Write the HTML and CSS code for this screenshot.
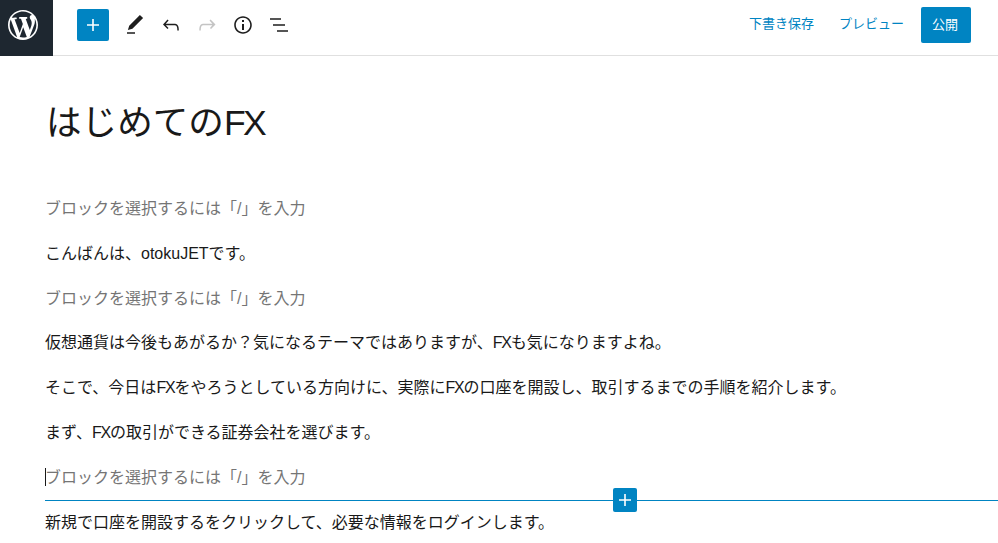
FILE: index.html
```html
<!DOCTYPE html>
<html lang="ja">
<head>
<meta charset="utf-8">
<title>はじめてのFX</title>
<link rel="stylesheet" href="styles.css">
</head>
<body>
<header class="topbar">
  <div class="wp-logo">
    <svg width="30" height="30" viewBox="0 0 20 20" fill="#fff"><path d="M20 10c0-5.510-4.490-10-10-10C4.480 0 0 4.490 0 10c0 5.520 4.480 10 10 10 5.510 0 10-4.480 10-10zM7.780 15.370L4.370 6.220c.55-.02 1.170-.08 1.170-.08.5-.06.44-1.130-.06-1.110 0 0-1.450.11-2.370.11-.18 0-.37 0-.58-.01C4.120 2.690 6.890 1.050 10 1.050c2.320 0 4.430.88 6.020 2.350-.62-.1-1.520.37-1.520 1.440 0 .66.38 1.220.79 1.880.31.550.5 1.220.5 2.200 0 1.330-1.250 4.460-1.250 4.460l-2.710-7.400c.48-.03.730-.16.730-.16.5-.05.44-1.250-.06-1.220 0 0-1.450.12-2.390.12-.87 0-2.330-.12-2.330-.12-.5-.03-.56 1.200-.06 1.220l.92.080 1.250 3.390zM17.410 10c.24-.64.740-1.870.43-4.250.7 1.290 1.050 2.710 1.050 4.250 0 3.290-1.730 6.240-4.480 7.820.99-2.680 2-5.090 3-7.820zM6.100 18.090C3.120 16.650 1.110 13.530 1.110 10c0-1.300.23-2.480.72-3.590zm4.030-6.630l2.360 6.390c.02.04.04.080.06.110-.79.280-1.630.43-2.550.43-.76 0-1.500-.11-2.210-.32z"/></svg>
  </div>
  <div class="tools">
    <button class="add-btn" aria-label="追加">
      <svg width="24" height="24" viewBox="0 0 24 24" fill="#fff"><path d="M18 11.200h-5.200V6h-1.600v5.200H6v1.600h5.200V18h1.600v-5.200H18z"/></svg>
    </button>
    <svg class="tool" width="24" height="24" viewBox="0 0 24 24" fill="#1e1e1e"><path d="M20.100 5.100L16.900 2 6.200 12.700l-1.300 4.400 4.500-1.300zM4 20.800h8v-1.500H4z"/></svg>
    <svg class="tool" width="24" height="24" viewBox="0 0 24 24" fill="#1e1e1e"><path d="M18.300 11.700c-.6-.6-1.400-.9-2.300-.9H6.700l2.900-3.300-1.100-1-4.500 5L8.500 16l1-1-2.700-2.700H16c.5 0 .9.200 1.300.5 1 1 1 3.400 1 4.500v.3h1.500v-.2c0-1.500 0-4.300-1.500-5.700z"/></svg>
    <svg class="tool" width="24" height="24" viewBox="0 0 24 24" fill="#c4c4c4"><path d="M15.600 6.500l-1.100 1 2.900 3.300H8c-.9 0-1.700.3-2.300.9-1.400 1.500-1.400 4.200-1.400 5.600v.2h1.500v-.3c0-1.100 0-3.500 1-4.500.3-.3.700-.5 1.300-.5h9.200L15 15l1 1 4.500-4.500z"/></svg>
    <svg class="tool" width="24" height="24" viewBox="0 0 24 24" fill="#1e1e1e"><path d="M12 3.200c-4.800 0-8.800 3.900-8.800 8.800 0 4.800 3.900 8.800 8.800 8.800 4.800 0 8.800-3.900 8.800-8.800 0-4.800-4-8.800-8.800-8.800zm0 16c-4 0-7.200-3.300-7.200-7.200C4.800 8 8 4.800 12 4.800s7.200 3.300 7.200 7.200c0 4-3.200 7.200-7.200 7.200zM11 17h2v-6h-2v6zm0-8h2V7h-2v2z"/></svg>
    <svg class="tool" width="24" height="24" viewBox="0 0 24 24" fill="#1e1e1e"><path d="M14 5.200H3v1.500h11zM18 11.200H6v1.500h12zM21 17.200H10v1.500h11z"/></svg>
  </div>
  <div class="actions">
    <a class="link draft">下書き保存</a>
    <a class="link">プレビュー</a>
    <button class="publish">公開</button>
    <svg class="more" width="24" height="24" viewBox="0 0 24 24" fill="#1e1e1e"><path d="M13 19h-2v-2h2v2zm0-6h-2v-2h2v2zm0-6h-2V5h2v2z"/></svg>
  </div>
</header>
<main class="editor">
  <h1 class="title">はじめての<span class="fx">FX</span></h1>
  <p class="block placeholder first">ブロックを選択するには「/」を入力</p>
  <p class="block">こんばんは、otokuJETです。</p>
  <p class="block placeholder">ブロックを選択するには「/」を入力</p>
  <p class="block">仮想通貨は今後もあがるか？気になるテーマではありますが、<span class="fx">FX</span>も気になりますよね。</p>
  <p class="block">そこで、今日は<span class="fx">FX</span>をやろうとしている方向けに、実際に<span class="fx">FX</span>の口座を開設し、取引するまでの手順を紹介します。</p>
  <p class="block">まず、<span class="fx">FX</span>の取引ができる証券会社を選びます。</p>
  <div class="active-wrap">
    <p class="block placeholder active"><span class="caret"></span>ブロックを選択するには「/」を入力</p>
    <div class="insert-line">
      <button class="insert-btn" aria-label="ブロックを追加">
        <svg width="24" height="24" viewBox="0 0 24 24" fill="#fff"><path d="M18 11.200h-5.200V6h-1.600v5.200H6v1.600h5.200V18h1.600v-5.200H18z"/></svg>
      </button>
    </div>
  </div>
  <p class="block">新規で口座を開設するをクリックして、必要な情報をログインします。</p>
</main>
</body>
</html>
```

FILE: styles.css
```css
html, body {
  margin: 0;
  padding: 0;
  height: 100%;
  overflow: hidden;
  background: #fff;
}
body {
  font-family: "Liberation Sans", "Noto Sans CJK JP", sans-serif;
  color: #191919;
}
button {
  border: 0;
  padding: 0;
  font: inherit;
  cursor: pointer;
}
.topbar {
  display: flex;
  align-items: center;
  height: 55px;
  border-bottom: 1px solid #e0e0e0;
  box-sizing: content-box;
  width: 1013px;
}
.wp-logo {
  width: 53px;
  height: 50px;
  padding-bottom: 6px;
  margin-bottom: -1px;
  background: #1e2730;
  display: flex;
  align-items: center;
  flex: none;
}
.wp-logo svg {
  margin-left: 8px;
}
.tools {
  display: flex;
  align-items: center;
  margin: 0 0 5px 24px;
  flex: none;
}
.add-btn {
  width: 32px;
  height: 32px;
  border-radius: 2px;
  background: #0084c2;
  display: flex;
  align-items: center;
  justify-content: center;
}
.tool {
  display: block;
  margin-left: 12px;
}
.add-btn + .tool {
  margin-left: 14px;
}
.actions {
  margin: 0 1px 5px auto;
  display: flex;
  align-items: center;
  flex: none;
}
.link {
  font-size: 13px;
  color: #0084c2;
  margin: 0 24px 5px 0;
}
.draft {
  margin-right: 25px;
}
.publish {
  width: 50px;
  height: 36px;
  margin-left: -7px;
  padding: 0 2px 4px 0;
  border-radius: 2px;
  background: #0084c2;
  color: #fff;
  font-size: 13px;
}
.more {
  margin-left: 17px;
}
.editor {
  padding: 0 0 0 45px;
  width: 953px;
}
.title {
  margin: 0;
  padding: 44px 0 0 1px;
  font-size: 35.6px;
  line-height: 46px;
  font-weight: 400;
}
.fx {
  letter-spacing: -0.075em;
}
.block {
  margin: 16px 0 0;
  font-size: 16px;
  line-height: 28.8px;
  white-space: nowrap;
}
.first {
  margin-top: 49px;
}
.placeholder {
  color: #757575;
}
.active-wrap {
  position: relative;
}
.caret {
  position: absolute;
  left: 0;
  top: 4px;
  width: 1px;
  height: 18px;
  background: #191919;
}
.insert-line {
  position: absolute;
  left: 0;
  right: 0;
  top: 36px;
  height: 1px;
  background: #0084c2;
}
.insert-btn {
  position: absolute;
  left: 568px;
  top: -12px;
  width: 24px;
  height: 24px;
  border-radius: 2px;
  background: #0084c2;
  display: flex;
  align-items: center;
  justify-content: center;
}
```
